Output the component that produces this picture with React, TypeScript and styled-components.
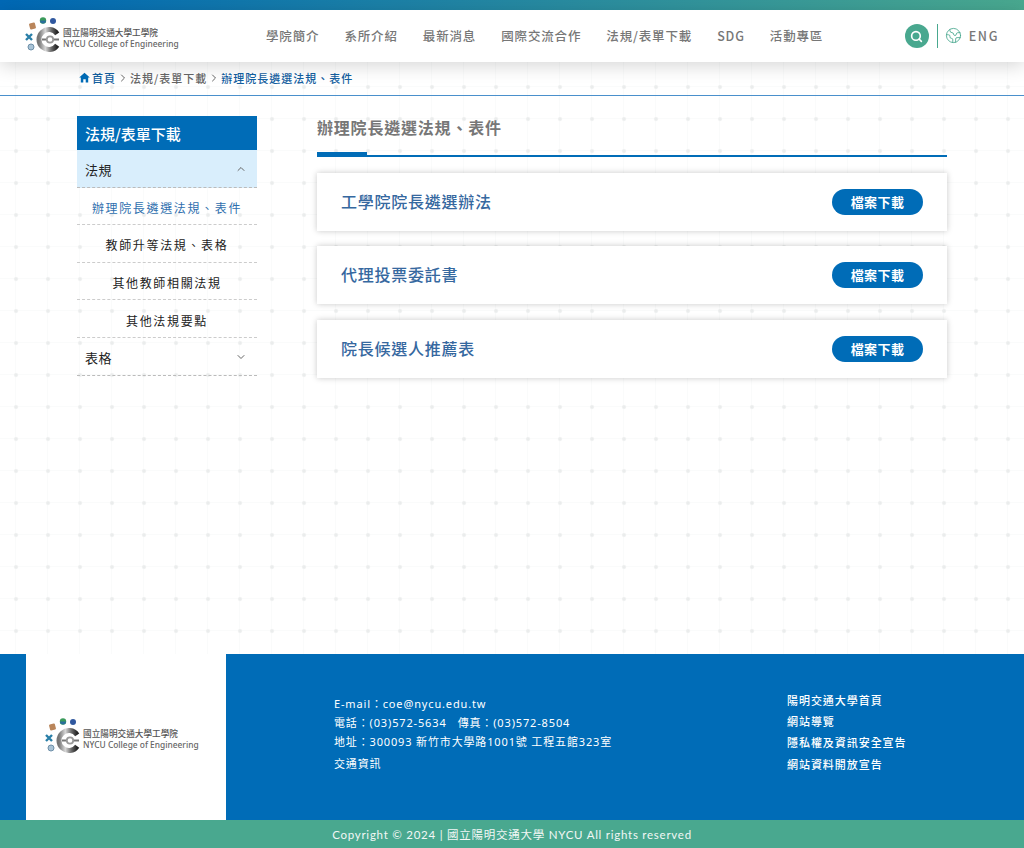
import React from 'react';
import styled, {createGlobalStyle} from 'styled-components';
import {ChevronDown, ChevronRight, ChevronUp, Earth, Search} from 'lucide-react';
import {IoMdHome} from 'react-icons/io';

const BLUE = '#006cb7';
const GREEN = '#49a88f';
const CJK = `"Noto Sans CJK TC", "Noto Sans", sans-serif`;

const GlobalStyle = createGlobalStyle`
  html, body {
    margin: 0;
    padding: 0;
  }
  body {
    font-family: ${CJK};
    background-color: #fff;
    background-image:
      radial-gradient(circle at 16px 23px, #e9ebeb 0, #eceeee 1.3px, transparent 2.6px),
      linear-gradient(to right, transparent 15.5px, #fafbfb 15.5px, #fafbfb 16.5px, transparent 16.5px),
      linear-gradient(to bottom, transparent 22.5px, #fafbfb 22.5px, #fafbfb 23.5px, transparent 23.5px);
    background-size: 32px 32px;
  }
  * {
    box-sizing: border-box;
  }
`;

const Page = styled.div`
  display: flex;
  flex-direction: column;
  height: 848px;
  overflow: hidden;
`;

const TopStrip = styled.div`
  height: 10px;
  background: linear-gradient(to right, #0068b5, ${GREEN});
`;

const Header = styled.header`
  position: relative;
  z-index: 2;
  display: flex;
  align-items: center;
  height: 52px;
  padding: 0 25px;
  background: #fff;
  box-shadow: 0 4px 18px rgba(0, 0, 0, 0.16);
`;

const LogoWrap = styled.div`
  display: flex;
  align-items: center;
  width: 154px;
  height: 38px;
  flex-shrink: 0;
  svg {
    flex-shrink: 0;
  }
`;

const LogoText = styled.div`
  display: flex;
  flex-direction: column;
  padding-top: 4px;
  color: #555;
  line-height: 12px;
  white-space: nowrap;
`;

const LogoCn = styled.span`
  font-size: 8.65px;
  font-weight: 500;
`;

const LogoEn = styled.span`
  font-family: "Noto Sans", sans-serif;
  font-size: 8.4px;
  font-weight: 500;
  color: #666;
`;

const Nav = styled.nav`
  display: flex;
  gap: 25px;
  margin-left: 87px;
  margin-top: -1px;
`;

const NavItem = styled.a`
  font-size: 12.5px;
  font-weight: 500;
  letter-spacing: 0.85px;
  color: #777;
  white-space: nowrap;
`;

const HeaderTools = styled.div`
  display: flex;
  align-items: center;
  margin-left: auto;
`;

const SearchButton = styled.span`
  display: flex;
  align-items: center;
  justify-content: center;
  width: 24px;
  height: 24px;
  border-radius: 50%;
  background: ${GREEN};
  color: #fff;
`;

const ToolDivider = styled.span`
  width: 1px;
  height: 24px;
  margin: 0 7px 0 8px;
  background: ${GREEN};
`;

const Lang = styled.span`
  display: flex;
  align-items: center;
  gap: 7px;
  margin-top: -1px;
  font-size: 12.5px;
  font-weight: 500;
  letter-spacing: 1.6px;
  color: #777;
`;

const Breadcrumb = styled.div`
  display: flex;
  align-items: center;
  height: 34px;
  padding: 0 0 2px 78px;
  border-bottom: 1px solid #4a90cc;
  font-size: 11px;
  font-weight: 500;
  letter-spacing: 1px;
  color: #666;
`;

const Crumb = styled.span<{$active?: boolean}>`
  color: ${p => (p.$active ? '#14609f' : '#666')};
`;

const CrumbSep = styled.span`
  display: flex;
  margin: 0 1px 0 1px;
  color: #666;
`;

const HomeIcon = styled(IoMdHome)`
  color: ${BLUE};
  margin-right: 1px;
`;

const Main = styled.main`
  flex: 1;
  display: flex;
  gap: 60px;
  padding: 20px 77px 0;
`;

const Sidebar = styled.aside`
  width: 180px;
  flex-shrink: 0;
`;

const SideTitle = styled.div`
  display: flex;
  align-items: center;
  height: 34px;
  padding: 1px 0 0 8px;
  background: ${BLUE};
  color: #fff;
  font-size: 15px;
  font-weight: 500;
`;

const SideGroup = styled.div<{$open?: boolean}>`
  display: flex;
  align-items: center;
  justify-content: space-between;
  height: 37.6px;
  padding: 2px 10px 0 8px;
  border-bottom: 1px dashed #bbb;
  background: ${p => (p.$open ? '#d9eefc' : 'transparent')};
  color: #222;
  font-size: 13px;
  letter-spacing: 0.5px;
  svg {
    color: #666;
  }
`;

const SideItem = styled.a<{$active?: boolean}>`
  display: flex;
  align-items: center;
  justify-content: center;
  height: 37.6px;
  padding-top: 3px;
  border-bottom: 1px dashed #ccc;
  color: ${p => (p.$active ? '#2f6fae' : '#222')};
  font-size: 12px;
  letter-spacing: 1.65px;
`;

const Content = styled.section`
  width: 630px;
`;

const PageTitle = styled.h2`
  position: relative;
  height: 41px;
  margin: 0 0 16px;
  border-bottom: 2px solid ${BLUE};
  color: #777;
  font-size: 16px;
  font-weight: 700;
  letter-spacing: 0.8px;
  line-height: 22px;
  &::after {
    content: "";
    position: absolute;
    left: 0;
    bottom: -2px;
    width: 50px;
    height: 5px;
    background: ${BLUE};
  }
`;

const FileList = styled.div`
  display: flex;
  flex-direction: column;
  gap: 15.9px;
`;

const FileCard = styled.div`
  display: flex;
  align-items: center;
  justify-content: space-between;
  height: 57.6px;
  padding: 0 24px;
  background: #fff;
  box-shadow: 0 0 6px rgba(0, 0, 0, 0.22);
`;

const FileName = styled.span`
  margin-top: -2px;
  color: #36689f;
  font-size: 16px;
  font-weight: 500;
  letter-spacing: 0.75px;
`;

const DownloadButton = styled.a`
  display: flex;
  align-items: center;
  justify-content: center;
  width: 91px;
  height: 26px;
  padding-bottom: 1px;
  border-radius: 13px;
  background: ${BLUE};
  color: #fff;
  font-size: 13px;
  font-weight: 700;
  letter-spacing: 0.4px;
`;

const Footer = styled.footer`
  display: flex;
  height: 166px;
  padding-left: 26px;
  background: ${BLUE};
  color: #fff;
`;

const FooterLogo = styled.div`
  display: flex;
  align-items: center;
  justify-content: center;
  width: 200px;
  padding-right: 8px;
  background: #fff;
`;

const Contact = styled.div`
  display: flex;
  flex-direction: column;
  width: 453px;
  margin-left: 108px;
  padding-top: 40px;
  font-family: "Noto Sans", ${CJK};
  font-size: 11px;
  font-weight: 400;
  letter-spacing: 0.85px;
  line-height: 19px;
`;

const TrafficLink = styled.a`
  margin-top: 3px;
`;

const FooterLinks = styled.div`
  display: flex;
  flex-direction: column;
  padding-top: 36px;
  font-size: 11px;
  font-weight: 500;
  letter-spacing: 0.95px;
  line-height: 21.2px;
`;

const Copyright = styled.div`
  display: flex;
  align-items: center;
  justify-content: center;
  height: 28px;
  padding-bottom: 1px;
  background: ${GREEN};
  color: #f2f7f5;
  font-family: "Lato", ${CJK};
  font-size: 11.5px;
  letter-spacing: 0.75px;
`;

const Logo = () => (
  <LogoWrap>
    <svg width="38" height="38" viewBox="0 0 38 38">
      <defs>
        <linearGradient id="logoMetal" x1="0" x2="1" y1="0" y2="0">
          <stop offset="0" stopColor="#777" />
          <stop offset="0.35" stopColor="#d8d8d8" />
          <stop offset="0.7" stopColor="#666" />
          <stop offset="1" stopColor="#222" />
        </linearGradient>
      </defs>
      <path d="M32.2 16.8 A10 10 0 1 0 32.200 28.200" fill="none" stroke="url(#logoMetal)" strokeWidth="5" />
      <path d="M17 22.500 H34" stroke="#777" strokeWidth="2" />
      <circle cx="25" cy="22.500" r="3.200" fill="#fff" stroke="#999" strokeWidth="1.800" />
      <rect x="4.500" y="6" width="6" height="6" rx="1" fill="#b9855a" transform="rotate(-15 7.500 9)" />
      <circle cx="18" cy="3.500" r="3.200" fill="#3a9a5b" />
      <path d="M15 3.500 A3 3 0 0 0 21 3.500 Z" fill="#2a6f9c" />
      <circle cx="28" cy="4" r="3" fill="#30589f" />
      <path d="M1 17 L7 23 M7 17 L1 23" stroke="#2a7fa8" strokeWidth="2.400" />
      <circle cx="6" cy="30" r="3" fill="#a9c3d6" stroke="#6d8fa8" />
    </svg>
    <LogoText>
      <LogoCn>國立陽明交通大學工學院</LogoCn>
      <LogoEn>NYCU College of Engineering</LogoEn>
    </LogoText>
  </LogoWrap>
);

const navItems = ['學院簡介', '系所介紹', '最新消息', '國際交流合作', '法規/表單下載', 'SDG', '活動專區'];
const subItems = ['辦理院長遴選法規、表件', '教師升等法規、表格', '其他教師相關法規', '其他法規要點'];
const files = ['工學院院長遴選辦法', '代理投票委託書', '院長候選人推薦表'];
const footerLinks = ['陽明交通大學首頁', '網站導覽', '隱私權及資訊安全宣告', '網站資料開放宣告'];

const App = () => {
  return (
    <>
      <GlobalStyle />
      <Page>
        <TopStrip />
        <Header>
          <Logo />
          <Nav>
            {navItems.map(item => <NavItem key={item}>{item}</NavItem>)}
          </Nav>
          <HeaderTools>
            <SearchButton><Search size={13} strokeWidth={3} /></SearchButton>
            <ToolDivider />
            <Lang>
              <Earth size={17} strokeWidth={1.2} color={GREEN} />
              ENG
            </Lang>
          </HeaderTools>
        </Header>
        <Breadcrumb>
          <HomeIcon size={13} />
          <Crumb $active>首頁</Crumb>
          <CrumbSep><ChevronRight size={12} /></CrumbSep>
          <Crumb>法規/表單下載</Crumb>
          <CrumbSep><ChevronRight size={12} /></CrumbSep>
          <Crumb $active>辦理院長遴選法規、表件</Crumb>
        </Breadcrumb>
        <Main>
          <Sidebar>
            <SideTitle>法規/表單下載</SideTitle>
            <SideGroup $open>法規<ChevronUp size={12} /></SideGroup>
            {subItems.map((item, i) => <SideItem key={item} $active={i === 0}>{item}</SideItem>)}
            <SideGroup>表格<ChevronDown size={12} /></SideGroup>
          </Sidebar>
          <Content>
            <PageTitle>辦理院長遴選法規、表件</PageTitle>
            <FileList>
              {files.map(file => (
                <FileCard key={file}>
                  <FileName>{file}</FileName>
                  <DownloadButton>檔案下載</DownloadButton>
                </FileCard>
              ))}
            </FileList>
          </Content>
        </Main>
        <Footer>
          <FooterLogo><Logo /></FooterLogo>
          <Contact>
            <span>E-mail：coe@nycu.edu.tw</span>
            <span>電話：(03)572-5634&nbsp;&nbsp; 傳真：(03)572-8504</span>
            <span>地址：300093 新竹市大學路1001號 工程五館323室</span>
            <TrafficLink>交通資訊</TrafficLink>
          </Contact>
          <FooterLinks>
            {footerLinks.map(link => <a key={link}>{link}</a>)}
          </FooterLinks>
        </Footer>
        <Copyright>Copyright © 2024 | 國立陽明交通大學 NYCU All rights reserved</Copyright>
      </Page>
    </>
  );
};

export default App;
